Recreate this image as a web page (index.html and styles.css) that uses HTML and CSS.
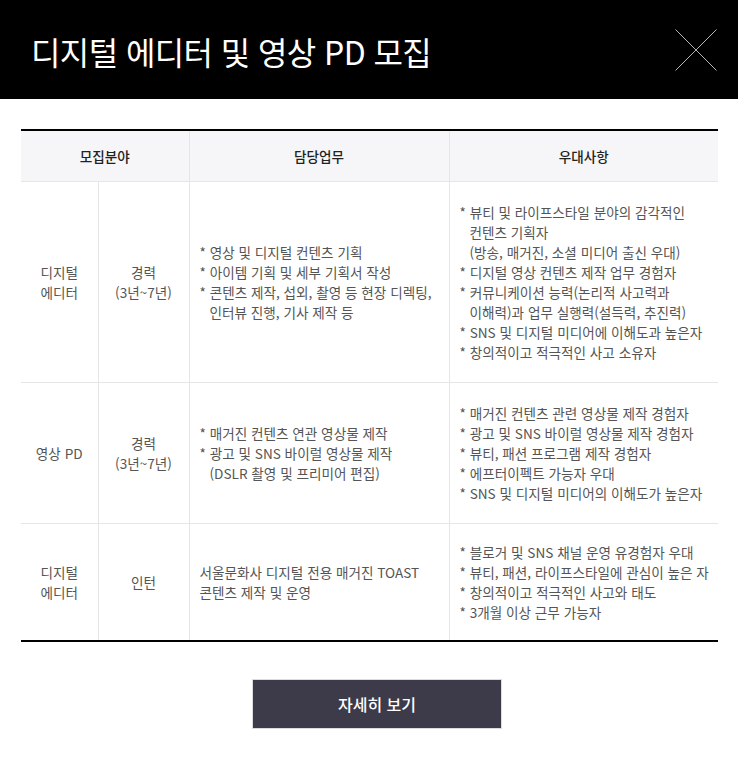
FILE: index.html
```html
<!DOCTYPE html>
<html lang="ko">
<head>
<meta charset="utf-8">
<title>디지털 에디터 및 영상 PD 모집</title>
<link rel="stylesheet" href="styles.css">
</head>
<body>
<header class="top">
  <h1 class="title">디지털 에디터 및 영상 PD 모집</h1>
  <button class="close" aria-label="닫기">
    <svg width="42" height="42" viewBox="0 0 42 42"><path d="M0.5 0.5 L41.5 41.5 M41.5 0.5 L0.5 41.5" stroke="#b4b4b4" stroke-width="1" fill="none"/></svg>
  </button>
</header>
<main class="content">
  <table class="jobs">
    <colgroup>
      <col class="c1"><col class="c2"><col class="c3"><col class="c4">
    </colgroup>
    <thead>
      <tr>
        <th colspan="2">모집분야</th>
        <th>담당업무</th>
        <th>우대사항</th>
      </tr>
    </thead>
    <tbody>
      <tr>
        <td class="center">디지털<br>에디터</td>
        <td class="center">경력<br>(3년~7년)</td>
        <td class="list">
          <div>* 영상 및 디지털 컨텐츠 기획</div>
          <div>* 아이템 기획 및 세부 기획서 작성</div>
          <div>* 콘텐츠 제작, 섭외, 촬영 등 현장 디렉팅,</div>
          <div class="cont">인터뷰 진행, 기사 제작 등</div>
        </td>
        <td class="list">
          <div>* 뷰티 및 라이프스타일 분야의 감각적인</div>
          <div class="cont">컨텐츠 기획자</div>
          <div class="cont">(방송, 매거진, 소셜 미디어 출신 우대)</div>
          <div>* 디지털 영상 컨텐츠 제작 업무 경험자</div>
          <div>* 커뮤니케이션 능력(논리적 사고력과</div>
          <div class="cont">이해력)과 업무 실행력(설득력, 추진력)</div>
          <div>* SNS 및 디지털 미디어에 이해도과 높은자</div>
          <div>* 창의적이고 적극적인 사고 소유자</div>
        </td>
      </tr>
      <tr>
        <td class="center">영상 PD</td>
        <td class="center">경력<br>(3년~7년)</td>
        <td class="list">
          <div>* 매거진 컨텐츠 연관 영상물 제작</div>
          <div>* 광고 및 SNS 바이럴 영상물 제작</div>
          <div class="cont">(DSLR 촬영 및 프리미어 편집)</div>
        </td>
        <td class="list">
          <div>* 매거진 컨텐츠 관련 영상물 제작 경험자</div>
          <div>* 광고 및 SNS 바이럴 영상물 제작 경험자</div>
          <div>* 뷰티, 패션 프로그램 제작 경험자</div>
          <div>* 에프터이펙트 가능자 우대</div>
          <div>* SNS 및 디지털 미디어의 이해도가 높은자</div>
        </td>
      </tr>
      <tr class="short">
        <td class="center">디지털<br>에디터</td>
        <td class="center">인턴</td>
        <td class="list">
          <div>서울문화사 디지털 전용 매거진 TOAST</div>
          <div>콘텐츠 제작 및 운영</div>
        </td>
        <td class="list">
          <div>* 블로거 및 SNS 채널 운영 유경험자 우대</div>
          <div>* 뷰티, 패션, 라이프스타일에 관심이 높은 자</div>
          <div>* 창의적이고 적극적인 사고와 태도</div>
          <div>* 3개월 이상 근무 가능자</div>
        </td>
      </tr>
    </tbody>
  </table>
  <div class="actions">
    <a class="more" href="#">자세히 보기</a>
  </div>
</main>
</body>
</html>
```
FILE: styles.css
```css
* { box-sizing: border-box; }
html, body { margin: 0; padding: 0; background: #fff; }
body {
  font-family: "Noto Sans CJK KR", "Noto Sans", sans-serif;
  color: #555;
}
.top {
  height: 99px;
  background: #000;
  display: flex;
  align-items: center;
  justify-content: space-between;
  padding: 0 21px 0 31px;
}
.title {
  margin: 0;
  padding-top: 4px;
  color: #fff;
  font-size: 32px;
  font-weight: 400;
  letter-spacing: -0.6px;
  line-height: 1.2;
}
.close {
  background: none;
  border: 0;
  padding: 0;
  width: 42px;
  height: 42px;
  display: block;
  cursor: pointer;
}
.close svg { display: block; }
.content {
  padding: 30px 20px 0 21px;
}
.jobs {
  width: 697px;
  border-collapse: collapse;
  table-layout: fixed;
  border-top: 2px solid #000;
  border-bottom: 2px solid #000;
  font-size: 13.6px;
  line-height: 20px;
}
.c1 { width: 77px; }
.c2 { width: 91px; }
.c3 { width: 260px; }
.c4 { width: 269px; }
.jobs th {
  height: 51px;
  background: #f6f6f8;
  color: #222;
  font-weight: 500;
  font-size: 13.6px;
  border-bottom: 1px solid #e6e6e6;
  border-left: 1px solid #e6e6e6;
  padding: 0;
}
.jobs th:first-child { border-left: 0; }
.jobs td {
  border-left: 1px solid #e6e6e6;
  border-bottom: 1px solid #e6e6e6;
  padding: 20px 10px;
  vertical-align: middle;
  white-space: nowrap;
}
.jobs td:first-child { border-left: 0; }
.jobs tbody tr:last-child td { border-bottom: 0; }
.jobs td.center { text-align: center; padding-left: 4px; padding-right: 4px; }
.jobs tr.short td { padding-top: 18px; padding-bottom: 18px; }
.list .cont { padding-left: 10px; }
.actions {
  display: flex;
  justify-content: center;
  padding-top: 37px;
  padding-left: 15px;
}
.more {
  width: 250px;
  height: 50px;
  display: flex;
  align-items: center;
  justify-content: center;
  background: #3d3b49;
  border: 1px solid #dcdcdc;
  color: #fff;
  font-size: 16px;
  font-weight: 500;
  text-decoration: none;
}
```
